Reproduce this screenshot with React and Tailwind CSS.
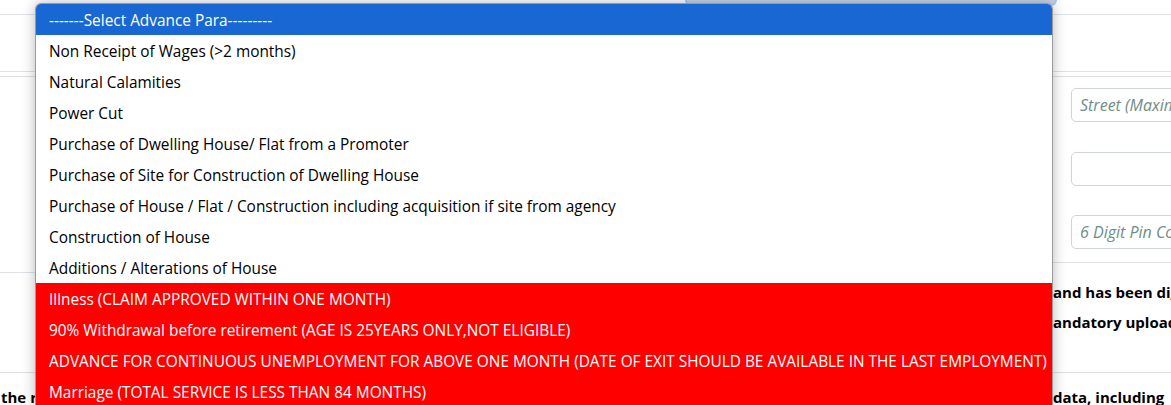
import React from "react";

const options = [
  { t: "-------Select Advance Para---------", c: "sel" },
  { t: "Non Receipt of Wages (>2 months)" },
  { t: "Natural Calamities" },
  { t: "Power Cut" },
  { t: "Purchase of Dwelling House/ Flat from a Promoter" },
  { t: "Purchase of Site for Construction of Dwelling House" },
  { t: "Purchase of House / Flat / Construction including acquisition if site from agency" },
  { t: "Construction of House" },
  { t: "Additions / Alterations of House" },
  { t: "Illness (CLAIM APPROVED WITHIN ONE MONTH)", c: "red" },
  { t: "90% Withdrawal before retirement (AGE IS 25YEARS ONLY,NOT ELIGIBLE)", c: "red" },
  { t: "ADVANCE FOR CONTINUOUS UNEMPLOYMENT FOR ABOVE ONE MONTH (DATE OF EXIT SHOULD BE AVAILABLE IN THE LAST EMPLOYMENT)", c: "red" },
  { t: "Marriage (TOTAL SERVICE IS LESS THAN 84 MONTHS)", c: "red" },
];

function Input({ placeholder }) {
  return (
    <div className="h-[34px] w-[140px] rounded-[5px] border border-[#ced4da] bg-white pl-[8px] flex items-center overflow-hidden whitespace-nowrap">
      <span className="italic text-[#6c8e86] text-[16px]">{placeholder}</span>
    </div>
  );
}

export default function App() {
  return (
    <div
      className="relative w-[1171px] h-[405px] overflow-hidden bg-white text-black"
      style={{ fontFamily: '"Open Sans", "Noto Sans", sans-serif' }}
    >
      {/* background page */}
      <div className="flex h-full">
        {/* left strip */}
        <div className="w-[35px] shrink-0 flex flex-col">
          <div className="h-[15px] border-b border-[#dee2e6]" />
          <div className="h-[57px] border-b border-[#dee2e6]" />
          <div className="h-[4px]" />
          <div className="h-[197px] border-t border-b border-[#dee2e6]" />
          <div className="h-[100px] border-b border-[#dee2e6]" />
          <div className="pt-[17px] pl-[1px] font-bold text-[15px] whitespace-nowrap leading-none">the r</div>
        </div>
        {/* middle (covered) */}
        <div className="w-[1018px] shrink-0 flex flex-col">
          <div className="ml-[652px] w-[368px] h-[4px] rounded-b-[6px] bg-[#c7d2e2] shadow-[0_0_0_2px_#a8c8f8]" />
        </div>
        {/* right column */}
        <div className="flex-1 flex flex-col min-w-0">
          <div className="h-[15px] border-b border-[#dee2e6]" />
          <div className="h-[57px] border-b border-[#dee2e6]" />
          <div className="h-[4px]" />
          <div className="h-[187px] border-t border-b border-[#dee2e6] pl-[18px] pt-[11px] flex flex-col gap-[30px]">
            <Input placeholder="Street (Maximum" />
            <Input placeholder="" />
            <div className="-mt-[1px]">
              <Input placeholder="6 Digit Pin Code" />
            </div>
          </div>
          <div className="h-[110px] border-b border-[#dee2e6] pt-[14px] font-bold text-[15px] leading-[30px] whitespace-nowrap">
            <div>and has been digitally</div>
            <div>andatory upload</div>
          </div>
          <div className="pt-[17px] font-bold text-[15px] whitespace-nowrap leading-none">data, including</div>
        </div>
      </div>

      {/* open dropdown list */}
      <div className="absolute left-[35px] top-[3px] w-[1018px] rounded-t-[6px] border-l border-r border-t border-[#9a9a9a] bg-white shadow-[0_0_14px_rgba(0,0,0,0.28)] overflow-hidden">
        {options.map((o, i) => (
          <div
            key={i}
            className={
              "h-[31px] pl-[13px] pt-[2px] flex items-center whitespace-nowrap text-[15.4px] " +
              (o.c === "sel"
                ? "bg-[#1967d2] text-white"
                : o.c === "red"
                ? "bg-[#ff0000] text-white"
                : "bg-white text-black")
            }
          >
            {o.t}
          </div>
        ))}
      </div>
    </div>
  );
}
